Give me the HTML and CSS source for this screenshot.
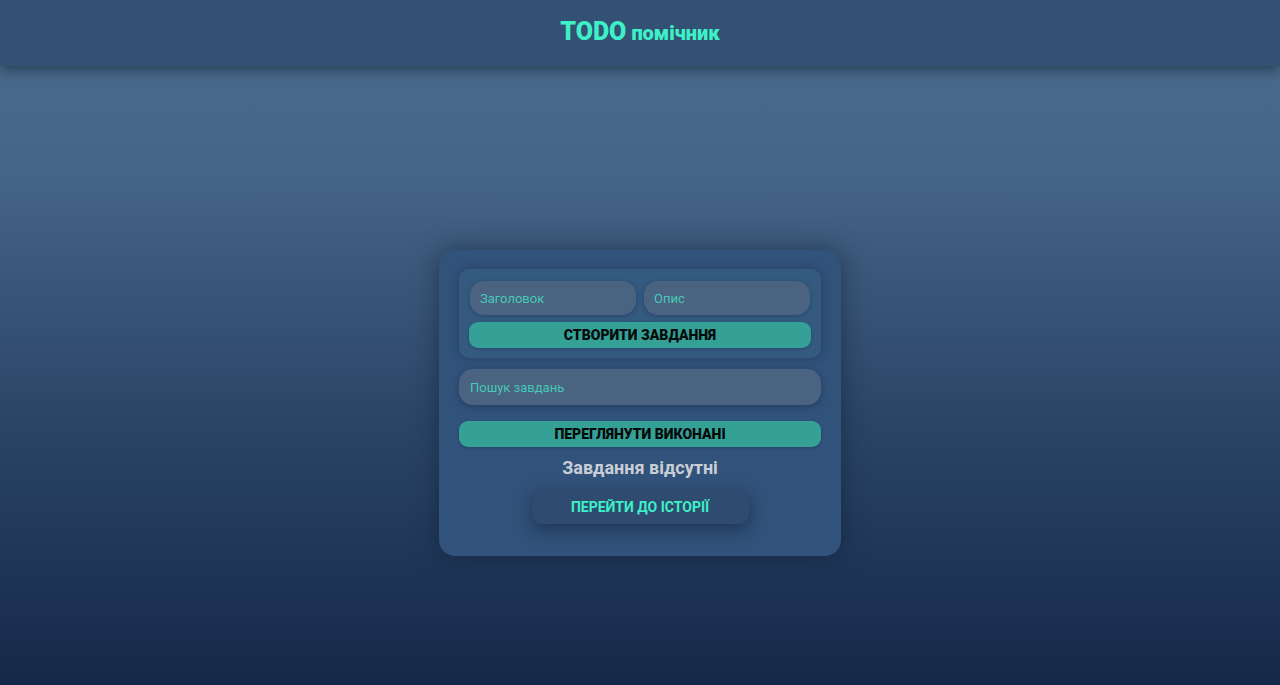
FILE: index.html
```html
<!DOCTYPE html>
<html lang="uk">
<head>
<meta charset="utf-8">
<title>TODO помічник</title>
<link rel="stylesheet" href="styles.css">
</head>
<body>
<header class="topbar">
  <h1 class="brand"><span class="brand-main">TODO</span><span class="brand-sub">помічник</span></h1>
</header>
<main class="main">
  <section class="card">
    <form class="create-form">
      <div class="fields">
        <input class="field" type="text" placeholder="Заголовок">
        <input class="field" type="text" placeholder="Опис">
      </div>
      <button class="btn-teal" type="button">СТВОРИТИ ЗАВДАННЯ</button>
    </form>
    <input class="search" type="text" placeholder="Пошук завдань">
    <button class="btn-teal btn-done" type="button">ПЕРЕГЛЯНУТИ ВИКОНАНІ</button>
    <p class="empty">Завдання відсутні</p>
    <button class="btn-history" type="button">ПЕРЕЙТИ ДО ІСТОРІЇ</button>
  </section>
</main>
</body>
</html>
```

FILE: styles.css
```css
* { box-sizing: border-box; }
html, body { margin: 0; padding: 0; height: 100%; }
body {
  font-family: Roboto, "Noto Sans", sans-serif;
  background: linear-gradient(to bottom, #4c6d8e 0%, #456587 25%, #2c4668 60%, #15284a 100%);
  min-height: 685px;
  overflow: hidden;
}
.topbar {
  height: 66px;
  background: #325173;
  display: flex;
  align-items: center;
  justify-content: center;
  box-shadow: 0 4px 12px rgba(10, 25, 40, 0.55);
  position: relative;
  z-index: 2;
}
.brand {
  margin: 0 0 3px;
  color: #3ef0c8;
  font-weight: 900;
  line-height: 1;
  display: flex;
  align-items: baseline;
  gap: 5px;
}
.brand-main { font-size: 25px; }
.brand-sub { font-size: 20px; }
.main {
  display: flex;
  justify-content: center;
  padding-top: 184px;
}
.card {
  width: 402px;
  background: #31527a;
  border-radius: 16px;
  box-shadow: 0 0 24px rgba(15, 30, 50, 0.55);
  padding: 19px 20px 32px;
  display: flex;
  flex-direction: column;
  align-items: center;
}
.create-form {
  width: 100%;
  background: #345a80;
  border-radius: 10px;
  padding: 12px 10px 10px;
  display: flex;
  flex-direction: column;
  gap: 7px;
  box-shadow: 0 0 10px rgba(20, 35, 60, 0.35);
}
.fields { display: flex; gap: 8px; padding: 0 1px; }
.field, .search {
  flex: 1;
  min-width: 0;
  height: 34px;
  border: none;
  border-radius: 14px;
  background: #4a6380;
  color: #3ee8c6;
  font-family: Roboto, "Noto Sans", sans-serif;
  font-size: 13px;
  padding: 0 10px;
  outline: none;
  box-shadow: 0 1px 4px rgba(20, 35, 60, 0.35);
}
.field::placeholder, .search::placeholder { color: #46c9b6; }
.btn-teal {
  width: 100%;
  height: 26px;
  border: none;
  border-radius: 9px;
  background: #35a096;
  color: #050a0a;
  font-family: Roboto, "Noto Sans", sans-serif;
  font-weight: 900;
  font-size: 14px;
  cursor: pointer;
  box-shadow: 0 1px 3px rgba(20, 35, 60, 0.35);
}
.search {
  flex: none;
  width: 100%;
  height: 36px;
  margin-top: 11px;
  border-radius: 14px;
  padding: 0 11px;
  box-shadow: 0 2px 6px rgba(20, 35, 60, 0.4);
}
.btn-done { margin-top: 16px; }
.empty {
  margin: 10px 0 0;
  color: #c9ced6;
  font-weight: 700;
  font-size: 18px;
  line-height: 22px;
}
.btn-history {
  margin-top: 10px;
  width: 217px;
  height: 35px;
  border: none;
  border-radius: 10px;
  background: #2f4b6f;
  color: #3ef0c8;
  font-family: Roboto, "Noto Sans", sans-serif;
  font-weight: 700;
  font-size: 14px;
  box-shadow: 0 6px 16px rgba(15, 30, 50, 0.5);
  cursor: pointer;
}
```
